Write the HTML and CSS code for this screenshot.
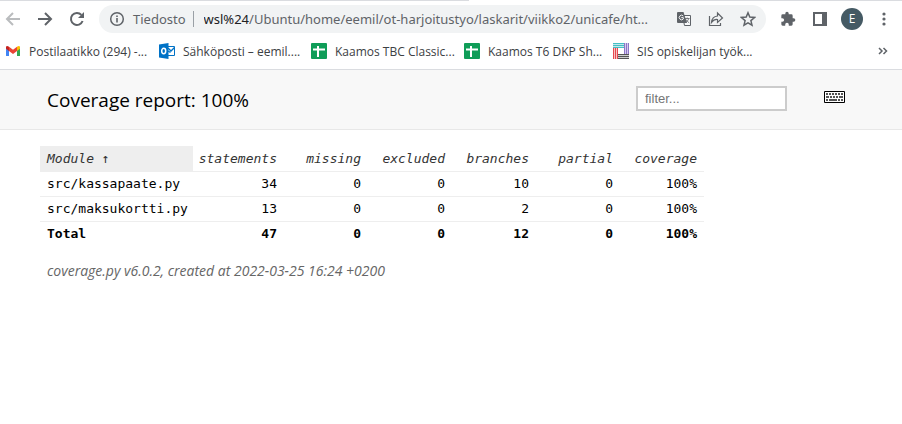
FILE: index.html
```html
<!DOCTYPE html>
<html lang="fi">
<head>
<meta charset="utf-8">
<meta name="viewport" content="width=device-width, initial-scale=1">
<title>Coverage report</title>
<link rel="stylesheet" href="styles.css">
</head>
<body>
<div class="browser">
  <div class="tab-edge"><span></span><span></span></div>
  <div class="toolbar">
    <nav class="nav" aria-label="Navigation">
      <button class="icon-btn dim" aria-label="Back"><svg width="16" height="16" viewBox="0 0 16 16"><path d="M15 8H2M8 2L2 8l6 6" fill="none" stroke="currentColor" stroke-width="2"/></svg></button>
      <button class="icon-btn" aria-label="Forward"><svg width="16" height="16" viewBox="0 0 16 16"><path d="M1 8h13M8 2l6 6-6 6" fill="none" stroke="currentColor" stroke-width="2"/></svg></button>
      <button class="icon-btn" aria-label="Reload"><svg width="16" height="16" viewBox="0 0 16 16"><path d="M13.6 10A6 6 0 1 1 12.4 3.9" fill="none" stroke="currentColor" stroke-width="2"/><path d="M15 1v6H9z" fill="currentColor"/></svg></button>
    </nav>
    <div class="address">
      <svg class="info" width="16" height="16" viewBox="0 0 16 16"><circle cx="8" cy="8" r="6.3" fill="none" stroke="currentColor" stroke-width="1.5"/><path d="M7.2 4.4h1.6V6H7.2zM7.2 7h1.6v4.6H7.2z" fill="currentColor"/></svg>
      <span class="scheme">Tiedosto</span>
      <span class="url"><span class="host">wsl%24</span>/Ubuntu/home/eemil/ot-harjoitustyo/laskarit/viikko2/unicafe/ht...</span>
      <span class="actions">
        <button class="icon-btn" aria-label="Translate"><svg width="16" height="16" viewBox="0 0 16 16"><path d="M6.500 4.500H14.500V14.500H8.500z" fill="#f8f9fa" stroke="currentColor"/><path d="M1 2q0-1 1-1h5.500l3.500 11H2q-1 0-1-1z" fill="currentColor"/><path d="M7.300 5A2.300 2.300 0 1 0 7.300 8V6.600H5.300" fill="none" stroke="#f1f3f4"/><path d="M9 7.500h4.500M11.200 6.500v1M12.800 7.500q-.7 2.300-2.800 3.800M10 8.500q1.200 2.200 3.200 3.300" fill="none" stroke="currentColor" stroke-width=".8"/></svg></button>
        <button class="icon-btn" aria-label="Share"><svg width="16" height="16" viewBox="0 0 16 16"><path d="M1.500 5v9.500h11V12M3.500 11.500Q4 5.500 9.500 5V2l5 5-5 4.500v-3Q6 8 3.500 11.500z" fill="none" stroke="currentColor" stroke-width="1.200"/></svg></button>
        <button class="icon-btn" aria-label="Bookmark"><svg width="16" height="16" viewBox="0 0 16 16"><path d="M8 1.800l1.800 4.300 4.700.4-3.600 3.100 1.100 4.600L8 11.800l-4 2.400 1.100-4.600L1.500 6.500l4.700-.4z" fill="none" stroke="currentColor" stroke-width="1.500"/></svg></button>
      </span>
    </div>
    <div class="tools">
      <button class="icon-btn" aria-label="Extensions"><svg width="16" height="16" viewBox="0 0 24 24"><path d="M20.500 11H19V7a2 2 0 0 0-2-2h-4V3.500a2.500 2.500 0 0 0-5 0V5H4a2 2 0 0 0-2 2v3.800h1.500a2.700 2.700 0 0 1 0 5.400H2V20a2 2 0 0 0 2 2h3.800v-1.500a2.700 2.700 0 0 1 5.400 0V22H17a2 2 0 0 0 2-2v-4h1.500a2.500 2.500 0 0 0 0-5z" fill="currentColor"/></svg></button>
      <button class="icon-btn" aria-label="Side panel"><svg width="16" height="16" viewBox="0 0 16 16"><path d="M1 1h14v14H1zM3 3v10h7V3z" fill="currentColor" fill-rule="evenodd"/></svg></button>
      <button class="avatar" aria-label="Profile">E</button>
      <button class="icon-btn" aria-label="Menu"><svg width="16" height="16" viewBox="0 0 16 16"><g fill="currentColor"><circle cx="8" cy="3" r="1.600"/><circle cx="8" cy="8" r="1.600"/><circle cx="8" cy="13" r="1.600"/></g></svg></button>
    </div>
  </div>
  <div class="bookmarks">
    <a href="#"><svg width="16" height="16" viewBox="0 0 16 16"><path d="M1 4v8.500q0 .5.500.500H4V6z" fill="#4285f4"/><path d="M12 6v7h2.500q.5 0 .5-.5V4z" fill="#34a853"/><path d="M12 3.800V8l3-2.300V4q-.4-1.700-2-.8z" fill="#fbbc04"/><path d="M4 8V3.800l4 3 4-3V8l-4 3z" fill="#ea4335"/><path d="M1 4v1.700L4 8V3.800l-1-.6Q1.400 2.300 1 4z" fill="#c5221f"/></svg>Postilaatikko (294) -...</a>
    <a href="#"><svg width="16" height="16" viewBox="0 0 16 16"><path d="M9 3.500h6.500v9H9" fill="#fff" stroke="#0072c6"/><path d="M9 5l3 3 3.500-3.500M9 8l2.500 1.500" fill="none" stroke="#0072c6" stroke-width="1.400"/><path d="M0 1.500L9.500 0v16L0 14.500z" fill="#0072c6"/><ellipse cx="4.700" cy="8" rx="2" ry="2.700" fill="none" stroke="#fff" stroke-width="1.500"/></svg>Sähköposti – eemil....</a>
    <a href="#"><svg width="16" height="16" viewBox="0 0 16 16"><rect width="16" height="16" rx="1" fill="#0f9d58"/><path d="M2 6.500h12M7 3v11" stroke="#fff" stroke-width="2"/></svg>Kaamos TBC Classic...</a>
    <a href="#"><svg width="16" height="16" viewBox="0 0 16 16"><rect width="16" height="16" rx="1" fill="#0f9d58"/><path d="M2 6.500h12M7 3v11" stroke="#fff" stroke-width="2"/></svg>Kaamos T6 DKP Sh...</a>
    <a href="#"><svg width="16" height="16" viewBox="0 0 16 16"><path d="M0 0h11v5H0z" fill="#c2e9ec"/><path d="M11 0h5v11h-5z" fill="#d5cbed"/><path d="M0 5h5v11H0z" fill="#f7c3c5"/><path d="M5 11h11v5H5z" fill="#ccc"/><path d="M0 .5h11M0 2.500h11M0 4.500h11" fill="none" stroke="#45bfc5"/><path d="M11.500 0v11M13.500 0v11M15.500 0v11" fill="none" stroke="#8d74c7"/><path d="M.5 5v11M2.500 5v11M4.500 5v11" fill="none" stroke="#e5484d"/><path d="M5 11.500h11M5 13.500h11M5 15.500h11" fill="none" stroke="#555"/></svg>SIS opiskelijan työk...</a>
    <button class="icon-btn more" aria-label="More bookmarks"><svg width="10" height="10" viewBox="0 0 10 10"><path d="M1 2l3 3-3 3M5.500 2l3 3-3 3" fill="none" stroke="currentColor" stroke-width="1.500"/></svg></button>
  </div>
</div>
<header class="report-header">
  <h1>Coverage report: 100%</h1>
  <input class="filter" type="text" placeholder="filter..." aria-label="Filter modules">
  <button class="keyboard" aria-label="Keyboard shortcuts"><svg width="21" height="12" viewBox="0 0 21 12"><path d="M.5.500h20v11H.5z" fill="#fff" stroke="#000"/><path d="M2 3h17" stroke="#555" stroke-width="2" stroke-dasharray="2 1"/><path d="M2 6h3M6 6h2M9 6h2M12 6h2M15 6h4M2 9h2M5 9h8M14 9h2M17 9h2" stroke="#555" stroke-width="2"/></svg></button>
</header>
<main class="report">
  <table>
    <colgroup><col class="c-name"><col class="c-first"><col><col><col><col><col></colgroup>
    <thead><tr><th class="sorted" scope="col">Module <span class="arrow">↑</span></th><th scope="col">statements</th><th scope="col">missing</th><th scope="col">excluded</th><th scope="col">branches</th><th scope="col">partial</th><th scope="col">coverage</th></tr></thead>
    <tbody>
      <tr><td><a href="#">src/kassapaate.py</a></td><td>34</td><td>0</td><td>0</td><td>10</td><td>0</td><td>100%</td></tr>
      <tr><td><a href="#">src/maksukortti.py</a></td><td>13</td><td>0</td><td>0</td><td>2</td><td>0</td><td>100%</td></tr>
    </tbody>
    <tfoot><tr><td>Total</td><td>47</td><td>0</td><td>0</td><td>12</td><td>0</td><td>100%</td></tr></tfoot>
  </table>
  <p class="credit">coverage.py v6.0.2, created at 2022-03-25 16:24 +0200</p>
</main>
</body>
</html>
```
FILE: styles.css
```css
* { box-sizing: border-box; }

body {
  margin: 0;
  background: #fff;
  color: #000;
  font-family: "Open Sans", "Noto Sans", sans-serif;
  font-size: 13px;
}

button { margin: 0; padding: 0; border: 0; background: none; font: inherit; }
svg { display: block; flex: none; }
a { color: inherit; text-decoration: none; }

.browser { border-bottom: 1px solid #dadce0; }
.tab-edge { display: flex; justify-content: space-between; height: 1px; }
.tab-edge span { width: 52%; background: #dadce0; }
.tab-edge span + span { width: 29%; }

.toolbar {
  display: flex;
  align-items: center;
  height: 36px;
  padding: 0 10px 0 5px;
  color: #5f6368;
}
.nav { display: flex; gap: 16px; width: 94px; }
.icon-btn { display: flex; color: #5f6368; }
.dim { color: #babcbe; }

.address {
  display: flex;
  flex: 1;
  align-items: center;
  min-width: 0;
  height: 28px;
  padding: 0 10px;
  border-radius: 14px;
  background: #f1f3f4;
  font-family: "Noto Sans", "Open Sans", sans-serif;
  white-space: nowrap;
}
.scheme { margin-left: 8px; padding-right: 7px; border-right: 1px solid #9aa0a6; line-height: 16px; }
.url { flex: 1; min-width: 0; overflow: hidden; margin-left: 10px; }
.host { color: #202124; }
.actions { display: flex; gap: 16px; }

.tools { display: flex; align-items: center; gap: 16px; margin-left: 14px; }
.avatar {
  width: 22px;
  height: 22px;
  margin: 0 -3px;
  border-radius: 50%;
  background: #455a64;
  color: #fff;
  font-size: 12px;
  line-height: 22px;
}

.bookmarks {
  display: grid;
  grid-template-columns: 154px 152px 153px 149px 1fr auto;
  align-items: center;
  height: 32px;
  padding: 0 14px 4px 5px;
  color: #3c4043;
  font-size: 12px;
  white-space: nowrap;
}
.bookmarks a { display: flex; align-items: center; gap: 8px; }

.report-header {
  display: flex;
  align-items: center;
  height: 60px;
  padding: 0 57px 3px 47px;
  border-bottom: 1px solid #e8e8e8;
  background: #f8f8f8;
}
h1 { flex: 1; margin: 0; padding-top: 4px; font-size: 19px; font-weight: 400; }
.filter {
  width: 151px;
  height: 25px;
  padding: 0 7px;
  border: 2px solid #ccc;
  background: #fff;
  font: 13px "Liberation Sans", sans-serif;
}
.filter::placeholder { color: #757575; }
.keyboard { margin-left: 37px; padding-bottom: 3px; }

.report { padding: 16px 40px; }
table {
  width: 664px;
  border-collapse: collapse;
  table-layout: fixed;
  font-family: "DejaVu Sans Mono", monospace;
  font-size: 13px;
}
col { width: 84px; }
.c-name { width: 153px; }
.c-first { width: 91px; }
th, td { height: 25px; padding: 0 7px 0 0; text-align: right; white-space: nowrap; }
th { color: #333; font-style: italic; font-weight: 400; }
thead tr, tbody tr { border-bottom: 1px solid #eee; }
th:first-child, td:first-child { padding: 0 0 0 7px; text-align: left; }
.sorted { background: #eee; }
tfoot { font-weight: 700; }
.arrow { font-style: normal; }
.credit { margin: 16px 7px; color: #666; font-size: 14px; font-style: italic; line-height: 18px; }
```
